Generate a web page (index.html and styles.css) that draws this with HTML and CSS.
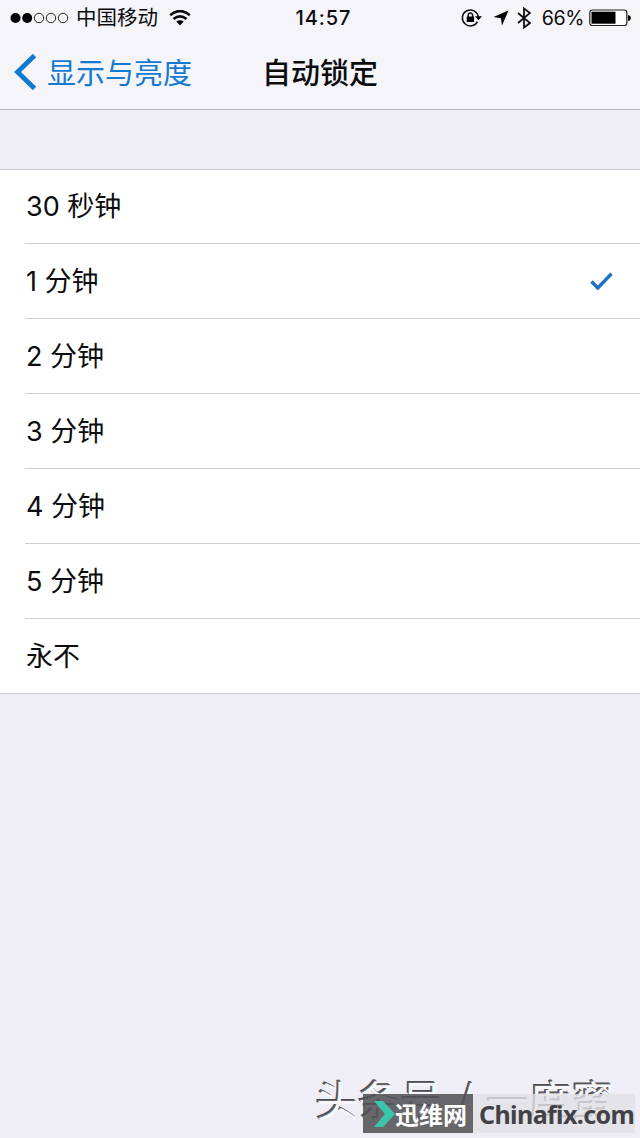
FILE: index.html
```html
<!DOCTYPE html>
<html lang="zh-CN">
<head>
<meta charset="utf-8">
<title>自动锁定</title>
<link rel="stylesheet" href="styles.css">
</head>
<body>
<div class="screen">
  <header class="header">
    <div class="status">
      <div class="status-left">
        <svg class="signal" width="60" height="12" viewBox="0 0 60 12">
          <circle cx="5.5" cy="6" r="5"/><circle cx="17.2" cy="6" r="5"/>
          <g class="hollow"><circle cx="29" cy="6" r="4.7"/><circle cx="41" cy="6" r="4.7"/><circle cx="53" cy="6" r="4.7"/></g>
        </svg>
        <span class="carrier">中国移动</span>
        <svg class="wifi" width="22" height="16" viewBox="0 0 22 16">
          <path class="arc" d="M1.2 5.2Q11-3 20.8 5.2M4.5 9Q11 3.8 17.5 9"/>
          <path d="M7.3 11.6Q11 8.7 14.7 11.6L11 15.5Z"/>
        </svg>
      </div>
      <span class="time">14:57</span>
      <div class="status-right">
        <svg width="21" height="20" viewBox="0 0 21 20">
          <path class="ring" d="M17.3 8.8A8 8 0 1 0 16.5 13.6"/>
          <path d="M14 8.3H21L17.5 12.3ZM5.7 8.6H13.1V14H5.7Z"/>
          <path class="ring" d="M7.2 9V7.3A2.2 2.2 0 0 1 11.6 7.3V9"/>
        </svg>
        <svg class="location" width="16" height="16" viewBox="0 0 16 16"><path d="M15.5.5L9 15.5L8 8.3L.5 7Z"/></svg>
        <svg class="bluetooth" width="14" height="22" viewBox="0 0 14 22"><path d="M1 6L13 16L7 20.5V1.5L13 6L1 16"/></svg>
        <span class="percent">66%</span>
        <svg class="battery" width="42" height="18" viewBox="0 0 42 18">
          <rect class="case" x=".8" y="1" width="37" height="15.5" rx="2.5"/>
          <rect x="2.5" y="2.7" width="24" height="12"/>
          <path d="M39 6Q41.8 6.5 41.8 9T39 12Z"/>
        </svg>
      </div>
    </div>
    <nav class="nav">
      <a class="back">
        <svg width="22" height="36" viewBox="0 0 22 36"><path d="M20.5 1.5L3.5 18L20.5 34.5"/></svg>
        <span>显示与亮度</span>
      </a>
      <h1 class="title">自动锁定</h1>
    </nav>
  </header>
  <ul class="list">
    <li class="row"><span>30 秒钟</span></li>
    <li class="row"><span>1 分钟</span>
      <svg class="check" width="23" height="18" viewBox="0 0 23 18"><path d="M1.5 9.5L7.8 16L21.5 1.8"/></svg></li>
    <li class="row"><span>2 分钟</span></li>
    <li class="row"><span>3 分钟</span></li>
    <li class="row"><span>4 分钟</span></li>
    <li class="row"><span>5 分钟</span></li>
    <li class="row"><span>永不</span></li>
  </ul>
  <div class="author-mark">头条号 / 一度蜜</div>
  <div class="site-mark">
    <div class="site-name">
      <svg width="21" height="26" viewBox="0 0 21 26"><path d="M0 0H9L21 13L9 26H0L11 13Z"/></svg>
      <span>迅维网</span>
    </div>
    <div class="site-url">Chinafix.com</div>
  </div>
</div>
</body>
</html>
```
FILE: styles.css
```css
* { box-sizing: border-box; }
body { margin: 0; }
.screen {
  position: relative;
  width: 640px;
  height: 1138px;
  overflow: hidden;
  background: #efeef6;
  color: #0c0c0e;
  font-family: Inter, "Noto Sans CJK SC", sans-serif;
}
svg { display: block; flex: none; }
.header {
  height: 110px;
  background: #f5f5f9;
  border-bottom: 1px solid #b4b4b9;
}
.status {
  display: grid;
  grid-template-columns: 1fr auto 1fr;
  align-items: center;
  height: 35px;
  padding: 0 9px 0 10px;
  font-size: 20.5px;
}
.status-left, .status-right { display: flex; align-items: center; }
.status-right { justify-content: flex-end; }
.hollow { fill: none; stroke: #222; stroke-width: 1; }
.carrier { margin-left: 6px; padding-top: 1px; line-height: 34px; }
.wifi { margin-left: 11px; }
.arc { fill: none; stroke: #0c0c0e; stroke-width: 2.7; }
.time { padding-left: 6px; font-size: 20px; font-weight: 500; letter-spacing: .9px; }
.ring { fill: none; stroke: #111; stroke-width: 1.5; }
.location { margin-left: 11px; }
.bluetooth { margin-left: 8px; fill: none; stroke: #111; stroke-width: 1.8; }
.percent { margin-left: 11px; font-size: 19.6px; letter-spacing: -.4px; }
.battery { margin-left: 5px; }
.case { fill: #fff; stroke: #222; stroke-width: 1.2; }
.nav {
  display: grid;
  grid-template-columns: 1fr auto 1fr;
  align-items: center;
  height: 74px;
  padding-left: 14px;
  padding-right: 14px;
}
.back {
  display: flex;
  align-items: center;
  gap: 11px;
  color: #1479d0;
  font-size: 29px;
  line-height: 40px;
}
.back span { padding-top: 3px; }
.back path { fill: none; stroke: #1479d0; stroke-width: 4.8; }
.title { margin: 0; padding-top: 3px; font-size: 29px; font-weight: 500; line-height: 40px; }
.list {
  margin: 59px 0 0;
  padding: 0 0 0 25px;
  list-style: none;
  background: #fff;
  border-top: 1px solid #cbcbd0;
  border-bottom: 1px solid #cbcbd0;
}
.row {
  display: flex;
  align-items: center;
  justify-content: space-between;
  height: 75px;
  padding: 0 27px 1px 1px;
  border-bottom: 1px solid #cecece;
  font-size: 27px;
}
.row span { padding-bottom: 2px; }
.row:first-child { height: 74px; }
.row:first-child span { padding-bottom: 4px; }
.row:last-child { height: 74px; border-bottom: 0; }
.check path { fill: none; stroke: #1b70c8; stroke-width: 3.4; }
.author-mark {
  position: absolute;
  left: 316px;
  top: 1069px;
  color: #f7f7fb;
  font-family: "Noto Sans CJK SC", sans-serif;
  font-size: 42.5px;
  line-height: 60px;
  word-spacing: 4px;
  white-space: nowrap;
  text-shadow: -1px -1px 0 #66666b, -2px -2px 0 #4c4c50;
}
.site-mark {
  position: absolute;
  left: 363px;
  top: 1094px;
  display: flex;
  width: 272px;
  height: 39px;
}
.site-name {
  display: flex;
  align-items: center;
  width: 110px;
  padding-left: 11px;
  background: rgba(82, 82, 86, .87);
  color: #fff;
  font: 700 24px/39px "Noto Sans CJK SC", sans-serif;
  white-space: nowrap;
}
.site-name path { fill: #3cc5ad; }
.site-url {
  width: 162px;
  padding-left: 6px;
  background: rgba(224, 224, 230, .8);
  color: #424246;
  font: 700 25px/40px "Noto Sans", sans-serif;
  letter-spacing: -.6px;
}
```
